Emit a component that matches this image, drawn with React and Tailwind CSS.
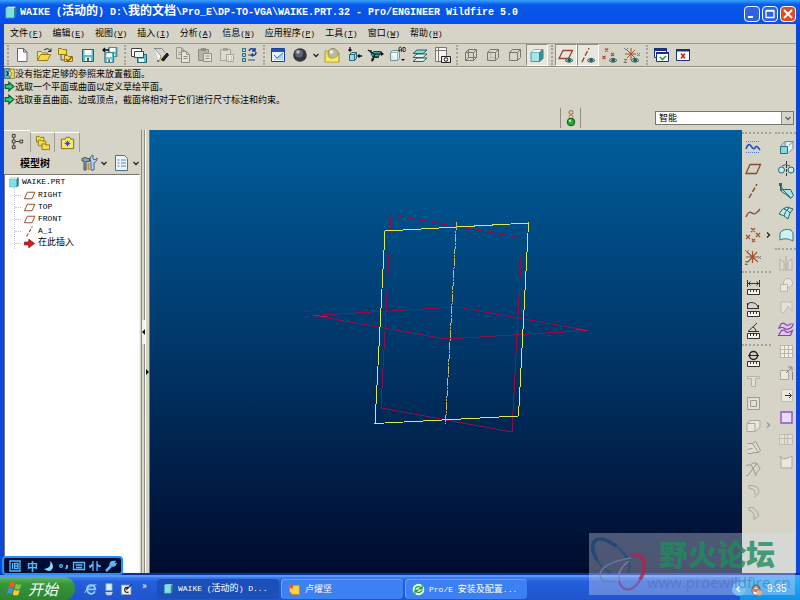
import React from "react";

const Icon = ({ children, size = 18 }) => (
  <svg width={size} height={size} viewBox="0 0 18 18" fill="none" strokeWidth="1" className="shrink-0" aria-hidden="true">
    {children}
  </svg>
);

const Eye = () => (
  <g>
    <path d="M8 14.500q4-4.500 8 0q-4 3.500-8 0z" fill="#b9d3d0" stroke="#44605f" />
    <circle cx="12.200" cy="14.300" r="1.800" fill="#17605e" />
  </g>
);
const Ruler = () => (
  <g>
    <path d="M3.500 11.500h12v5h-12z" fill="#f4f4ee" stroke="#333" />
    <path d="M6.500 12v2M9.500 12v2M12.500 12v2" stroke="#333" />
  </g>
);
const Disk = ({ x = 0, y = 0, s = 1 }) => (
  <g transform={`translate(${x} ${y}) scale(${s})`}>
    <path d="M3.500 3.500h11v12h-11z" fill="#5ac4cc" stroke="#2d5f70" />
    <path d="M5.500 4h7v5h-7zM6 11.500h6V15H6z" fill="#fff" />
    <path d="M8 12h2v3H8z" fill="#2d5f70" />
  </g>
);
const Folder = ({ x = 0, y = 0 }) => (
  <path transform={`translate(${x} ${y})`} d="M.5 1.500h3l1 1h4v5h-8z" fill="#f7dc4a" stroke="#8f7a18" />
);
const Page = ({ x = 0, y = 0, fill = "#fff", stroke = "#666" }) => (
  <g transform={`translate(${x} ${y})`}>
    <path d="M.5.5h5l3 3v8h-8z" fill={fill} stroke={stroke} />
    <path d="M5.500.5v3h3M2.500 5.500h4M2.500 7.500h4" stroke={stroke} />
  </g>
);
const Crosses = ({ color = "#a2522d" }) => (
  <path d="M4 2.500l3 3m0-3l-3 3M1.500 10l3 3m0-3l-3 3M10 7l3 3m0-3l-3 3" stroke={color} strokeWidth="1.300" />
);
const Cube = ({ hidden = false }) => (
  <g stroke="#77776f">
    <path d="M3.500 6.500h8v8h-8zM3.500 6.500l3-3h8v8l-3 3M11.500 6.500l3-3" />
    {hidden && <path d="M6.500 3.500v8h8M6.500 11.500l-3 3" />}
  </g>
);

const art = {
  newFile: <path d="M4.500 2.500h6l3.500 3.500v9.500H4.500zM10.500 2.500V6H14" fill="#fff" stroke="#666" />,
  open: (
    <g>
      <path d="M2.500 14.500v-9h4l1 1.500h5v2" fill="#f6e58a" stroke="#96801c" />
      <path d="M2.500 14.500l3-6h10l-3 6z" fill="#f8d848" stroke="#96801c" />
      <path d="M9 4q4-3 6.500 1M13 5.500h3V2.500" stroke="#222" />
    </g>
  ),
  workdir: (
    <g>
      <Folder x={1} y={1} />
      <Folder x={7} y={8} />
      <path d="M4 9v5h3" stroke="#555" />
      <path d="M9 13l2 2 4-4" stroke="#a33c16" strokeWidth="1.300" />
    </g>
  ),
  save: <Disk />,
  saveCopy: (
    <g>
      <Disk x={5} y={-1} s={0.75} />
      <Disk x={1} y={4} s={0.8} />
      <path d="M2 4h6M4 2L2 4l2 2" stroke="#111" strokeWidth="1.300" />
    </g>
  ),
  regen: (
    <g>
      <path d="M1.500 2.500h10v8h-10z" fill="#fff" stroke="#444" />
      <path d="M7.500 8.500h9v8h-9z" fill="#5ac4cc" stroke="#2d5f70" />
      <path d="M4.500 5.500h9v6h-9z" fill="#f2fbfb" stroke="#444" />
      <path d="M9 13h5v3H9z" fill="#fff" />
    </g>
  ),
  select: (
    <g>
      <path d="M2 2.500h8l3 4" stroke="#888" />
      <path d="M3 3l6 7-2 6" fill="#f6f6f6" stroke="#999" />
      <path d="M9 14l6-7 1.500 2-5 6z" fill="#222" stroke="#111" />
      <path d="M7 16l2-2.500 2 2z" fill="#e8d43c" />
      <path d="M5 15h2" stroke="#222" />
    </g>
  ),
  copy: (
    <g>
      <Page x={2} y={1} fill="#d9d7ca" stroke="#9a998f" />
      <Page x={7} y={5} fill="#e4e2d6" stroke="#8f8e85" />
    </g>
  ),
  paste: (
    <g>
      <path d="M2.500 3.500h10v11h-10z" fill="#b5b3a8" stroke="#8f8e85" />
      <path d="M5 2h5v3H5z" fill="#8f8e85" />
      <path d="M7.500 7.500h8v8h-8zM9.500 10h4M9.500 12.500h4" fill="#e4e2d6" stroke="#8f8e85" />
    </g>
  ),
  pasteSpecial: (
    <g>
      <path d="M2.500 3.500h10v11h-10z" fill="#dddbcf" stroke="#a3a298" />
      <path d="M5 2h5v3H5z" fill="#a3a298" />
      <path d="M8.500 8.500h7v7h-7zM10 11h1M10 13.500h1M13 11h1M13 13.500h1" fill="#e8e6da" stroke="#a3a298" />
    </g>
  ),
  tree: (
    <g>
      <path d="M2.500 2.500h3v3h-3zM2.500 7.500h3v3h-3zM2.500 12.500h3v3h-3z" fill="#8fdfe3" stroke="#2f6675" />
      <path d="M8 9h4M8 14h7" stroke="#777" strokeWidth="1.500" />
      <path d="M9 5q1-3 4-2l2 1M15 2v3h-3M16 6q0 4-4 3M13 7.500L11.500 9l1.500 1.500" stroke="#1c3f9a" strokeWidth="1.500" />
    </g>
  ),
  repaint: (
    <g>
      <path d="M2.500 2.500h13v13h-13z" fill="#e8f2ff" stroke="#1b3f9b" />
      <path d="M3 3h12v3H3z" fill="#2450b8" />
      <path d="M4 14L14 8v6z" fill="#a9d8f2" />
      <path d="M5 9l3 3 6-5" stroke="#3070b0" />
    </g>
  ),
  sphere: (
    <g>
      <circle cx="9" cy="9" r="6.800" fill="#33363f" />
      <circle cx="8" cy="7.500" r="4" fill="#5d6472" />
      <circle cx="7" cy="6" r="1.800" fill="#b9bec9" />
    </g>
  ),
  appearance: (
    <g>
      <path d="M2 5h4l1 2h9v9H2z" fill="#f5e04e" stroke="#b39b1c" />
      <circle cx="10" cy="7.500" r="5" fill="#bdb99f" stroke="#8e8a6d" />
      <circle cx="8.500" cy="6" r="1.800" fill="#f2f0e2" />
      <path d="M3 11q6 4 12-1v5.500H3z" fill="#f9e95c" />
    </g>
  ),
  refit: (
    <g>
      <path d="M4.500 8.500l2-2h5v6l-2 2h-5z" fill="#8fe0e4" stroke="#2f6675" />
      <path d="M4.500 8.500h5v6M9.500 8.500l2-2" stroke="#2f6675" />
      <path d="M5 1v4M3.500 3.500L5 5l1.500-1.500M17 10h-4M14.500 8.500L13 10l1.500 1.500" stroke="#111" strokeWidth="1.300" />
    </g>
  ),
  orient: (
    <g>
      <path d="M4 7.500l3-2h7l-3 6H6z" fill="#3aa9a2" stroke="#17413f" />
      <path d="M1 4l6 4 9 0M8 8l-3 7M6 11h6M4 4v3" stroke="#111" strokeWidth="1.200" />
      <path d="M14 5.500l3 2.500-3 2zM4.500 12l3 1.500L4.500 16z" fill="#111" />
    </g>
  ),
  views: (
    <g>
      <path d="M1.500 6.500l2-2h7v8l-2 2h-7z" fill="#cff2f3" stroke="#6e9096" />
      <path d="M1.500 6.500h7v8M8.500 6.500l2-2" stroke="#8fb2b8" fill="#fff" />
      <path d="M10 6V2.500q0-1.500 1.200-1.500t1.300 1.500V6M10 4h2.500M14 1.500v4h2q1-1 0-2 1-1.500 0-2z" stroke="#333" />
      <path d="M12 13h4l-2 2z" fill="#111" />
    </g>
  ),
  layers: (
    <g stroke="#2f5f66">
      <path d="M2 15.500l4-3.500h10l-4 3.500z" fill="#f0f0e8" />
      <path d="M2 11.500L6 8h10l-4 3.500z" fill="#f0f0e8" />
      <path d="M2 7.500L6 4h10l-4 3.500z" fill="#7ddbe0" />
    </g>
  ),
  viewMgr: (
    <g>
      <path d="M2.500 1.500h11v14h-11zM5.500 1.500v14M2.500 4.500h11" fill="#f4f4ec" stroke="#777" />
      <path d="M8.500 10.500h9v6h-9z" fill="#eee" stroke="#222" />
      <circle cx="13" cy="13.500" r="1.800" stroke="#222" />
    </g>
  ),
  wire: <Cube hidden />,
  hiddenLine: (
    <g>
      <path d="M6.500 6v5.500H11M6.500 11.500l-3 3" stroke="#b5b3a7" />
      <Cube />
    </g>
  ),
  noHidden: <Cube />,
  shaded: (
    <g>
      <path d="M3 6.500h8.500v9H3z" fill="#a5e8ec" stroke="#4e9aa3" />
      <path d="M3 6.500l3-3h9l-3.500 3z" fill="#effcfc" stroke="#7bb9bf" />
      <path d="M11.500 6.500l3.500-3v9l-3.500 3z" fill="#3f8d97" stroke="#3f7d87" />
    </g>
  ),
  planeEye: (
    <g>
      <path d="M2 12.500L6 4.500h9.500l-4 8z" stroke="#95482c" strokeWidth="1.300" />
      <Eye />
    </g>
  ),
  axisEye: (
    <g>
      <path d="M3 16L10 2" stroke="#95482c" strokeWidth="1.500" strokeDasharray="5 2" />
      <Eye />
    </g>
  ),
  pointEye: (
    <g>
      <Crosses color="#b4452f" />
      <Eye />
    </g>
  ),
  csysEye: (
    <g>
      <path d="M4 4l8 8M4 12l8-8M2 8h11M8 2v12" stroke="#a2522d" />
      <path d="M1 2l2 2 2-2M14 7l3 3m0-3l-3 3M1 13.500h3l-3 3h3" stroke="#777" />
      <Eye />
    </g>
  ),
  winOk: (
    <g>
      <path d="M2.500 2.500h12v9h-12z" fill="#fff" stroke="#1c2f78" />
      <path d="M2 2h13v3H2z" fill="#1c2f78" />
      <path d="M4.500 6.500h12v9h-12z" fill="#fff" stroke="#1c2f78" />
      <path d="M4 6h13v2H4z" fill="#1c2f78" />
      <path d="M8 11l2.500 2.500L14 10" stroke="#2a9a2a" strokeWidth="1.600" />
    </g>
  ),
  winClose: (
    <g>
      <path d="M2.500 3.500h13v11h-13z" fill="#fff" stroke="#1c2f78" />
      <path d="M2 3h14v2.500H2z" fill="#1c2f78" />
      <path d="M7 7.500l4 5m0-5l-4 5" stroke="#c42020" strokeWidth="1.500" />
    </g>
  ),

  sketch: (
    <g>
      <path d="M2 3.500h14M2 14.500h14" stroke="#4d80c0" strokeDasharray="1 1" />
      <path d="M2 11q2.500-7 5-3t4 2q1-4 5 2" stroke="#1d4fc0" strokeWidth="1.500" />
    </g>
  ),
  plane: <path d="M2 13.500L6 4.500h10.500l-4 9z" stroke="#8a4a2c" strokeWidth="1.300" />,
  axis: <path d="M5 16L13 2" stroke="#8a4a2c" strokeWidth="1.500" strokeDasharray="5 2" />,
  curve: <path d="M2 13q3-7 6-4t8-4" stroke="#8a4a2c" strokeWidth="1.300" />,
  points: (
    <path d="M7 2l4 4m0-4l-4 4M2 9l4 4m0-4l-4 4M12 7l4 4m0-4l-4 4M8 13l3 3m0-3l-3 3" stroke="#a2522d" strokeWidth="1.300" />
  ),
  csys: (
    <g>
      <path d="M3 4l11 10M4 14L13 4M2 9h12M8.500 3v12" stroke="#a2522d" strokeWidth="1.200" />
      <path d="M1 2l2 2 2-2M14 8l3 3m0-3l-3 3M1 13.500h3l-3 3h3" stroke="#777" />
    </g>
  ),
  measure: (
    <g>
      <path d="M3.500 2v7M15.500 2v7M4 5.500h11M6.500 3.500l-2 2 2 2M12.500 3.500l2 2-2 2" stroke="#333" />
      <Ruler />
    </g>
  ),
  length: (
    <g>
      <path d="M4 5q0-2.500 3-2.500 6 0 7 5M3.500 3v6M14.500 5v4M4 8.500h10" stroke="#333" />
      <Ruler />
    </g>
  ),
  angle: (
    <g>
      <path d="M13 1L4 9.500h11M9 5q2.500 1 3 4" stroke="#333" />
      <Ruler />
    </g>
  ),
  diameter: (
    <g>
      <circle cx="9.500" cy="5.500" r="4" stroke="#222" strokeWidth="1.500" />
      <path d="M4 5.500h11" stroke="#222" />
      <Ruler />
    </g>
  ),
  hole: <path d="M3.500 4.500h12v2h-4v8h-4v-8h-4z" fill="#e2e0d5" stroke="#b3b1a6" />,
  shell: <path d="M3.500 3.500h12v12h-12zM6.500 6.500h6v6h-6z" fill="#e2e0d5" stroke="#9e9c92" />,
  rib: <path d="M3 7.500h8v8H3zM3 7.500l4-3h9v7l-5 4" fill="#e8e6dc" stroke="#aaa89d" />,
  draft: <path d="M3.500 5.500h5l6 9h-4l-3 1h-4M8.500 5.500l3-2 5 9-2 2M3.500 11.500l5-1" fill="#deddd2" stroke="#99978c" />,
  round: <path d="M2 5.500q6-2 7 3l-5 7H2M9 8.500l4-5 3 5-5 7M9 8.500l3 7M13 3.500q-4-2-6 1" stroke="#99978c" />,
  chamfer: <path d="M5 3.500q10-1 10 7l-5 5M5 6.500q7 0 6 6M5 3.500v3" stroke="#a8a69b" />,
  chamfer2: <path d="M5 3.500q6-1 9 6l1 2-5 4M5 6.500q4 0 5 5v4M5 3.500v3" stroke="#a8a69b" />,

  extrude: (
    <g>
      <path d="M8 3.500h8v7l-4 4M8 3.500l-4 4M12 7.500l4-4M8 3.500v4" fill="#deeff0" stroke="#718a8d" />
      <path d="M3.500 8.500h7v7h-7z" fill="#83dbe2" stroke="#276d7b" />
    </g>
  ),
  revolve: (
    <g>
      <circle cx="4.500" cy="10" r="3" fill="#c1eff2" stroke="#32606a" />
      <circle cx="14" cy="10" r="3" fill="#c1eff2" stroke="#32606a" />
      <path d="M9.500 1v16" stroke="#333" strokeDasharray="3 1" />
      <path d="M5 6q4-3 8 0" stroke="#555" />
    </g>
  ),
  sweep: (
    <g>
      <path d="M3.500 2.500l2 5 8 0 3 6-3 3-3-3-6-4z" fill="#a6e6ea" stroke="#32606a" />
      <path d="M3.500 2.500v6l2-1 8 8" stroke="#32606a" />
      <path d="M2 1h3v3H2z" fill="#32606a" />
    </g>
  ),
  boundary: (
    <g>
      <path d="M2 10q3-6 8-7l6 2q-4 4-5 10-4-4-9-5z" fill="#b5ecef" stroke="#32606a" />
      <path d="M7 5q4 1 6 4M7 12q1-5 5-8" stroke="#32606a" />
    </g>
  ),
  style: <path d="M3 14V7q3-5 11-3l2 3v8q-7-4-13-1z" fill="#c9f3f4" stroke="#46727a" />,
  mirror: (
    <g>
      <path d="M3 5l4 3v8H3zM15 5l-4 3v8h4z" fill="#deddd2" stroke="#b3b1a6" />
      <path d="M9 2v15" stroke="#aaa89d" />
    </g>
  ),
  merge: (
    <g fill="#e9e7dd" stroke="#bab8ad">
      <circle cx="11" cy="7" r="4.500" />
      <path d="M3.500 8.500h7v7h-7z" />
    </g>
  ),
  trim: <path d="M4 4h11v9l-4-5-4 7-3-1z" fill="#e5e3d9" stroke="#bebcb1" />,
  offset: (
    <path d="M1.500 8.500l3-5q3-1 4 1t6-1M1.500 8.500q4-2 6 0t7-1l2-4M1.500 15.500l3-5q3-1 4 1t7-1l-2 5z" fill="#e2c5f3" stroke="#8a3eb6" strokeWidth="1.200" />
  ),
  pattern: (
    <path d="M3.500 3.500h12v12h-12zM7.500 4v11M11.500 4v11M4 7.500h11M4 11.500h11" fill="#f2efe7" stroke="#bcb3aa" />
  ),
  extend: (
    <g stroke="#aaa89d">
      <path d="M3.500 6.500h8v9h-8z" fill="#e9e7dd" />
      <path d="M9 9l6-6M11 3h4v4M15.500 8v8" stroke="#88867d" />
    </g>
  ),
  project: (
    <g>
      <path d="M4.500 3.500h11v12h-11z" fill="#eceadf" stroke="#c0beb3" />
      <path d="M8 9.500h6M12 7l2.500 2.500L12 12" stroke="#333" />
    </g>
  ),
  fill: <path d="M4 4h11v11H4z" fill="#eadcfa" stroke="#8b55cc" strokeWidth="1.400" />,
  thicken: <path d="M2.500 4.500h13v10h-13zM7.500 5v9M10.500 5v9M3 8.500h12" fill="#e2e0d5" stroke="#bebcb1" />,
  solidify: <path d="M3 4l3 3 5-1 4-2v12H4V7z" fill="#eae8de" stroke="#aaa89d" />,

  modelTree: <path d="M3.500 1.500h3v3h-3zM3.500 7.500h3v3h-3zM3.500 13.500h3v3h-3zM11.500 7.500h3v3h-3zM7 9h4M5 5v2M5 11v2" stroke="#333" />,
  folders: (
    <g>
      <Folder x={2} y={1} />
      <Folder x={4} y={5} />
      <Folder x={8} y={9} />
    </g>
  ),
  favorites: (
    <g>
      <path d="M2.500 5.500h4l1-2h4l1 2h3v10h-13z" fill="#fae96a" stroke="#7a6a1c" />
      <path d="M9 7v6M6 10h6M7 8l4 4m0-4l-4 4" stroke="#2244b8" />
    </g>
  ),
  tools: (
    <g>
      <path d="M2 4.500q3-2 6 0h1.500v3H6V16H4V7H2z" fill="#8fa6b5" stroke="#40525e" />
      <path d="M11 16V8l-1-3q0-3 3-4v4l2 1 2-2q1 3-3 5v7z" fill="#b9d4ee" stroke="#40608c" />
      <path d="M7.500 9h2v7h-2z" fill="#d28a30" />
    </g>
  ),
  list: (
    <g>
      <path d="M3.500 1.500h9l3 3v12h-12z" fill="#eaf5fc" stroke="#50708c" />
      <path d="M5.500 6h2M9 6h5M5.500 9h2M9 9h5M5.500 12h2M9 12h5" stroke="#5a84a8" />
    </g>
  ),
  part: (
    <g>
      <path d="M2.500 4.500h11v12h-11z" fill="#7fe0e6" stroke="#5ab8c0" />
      <path d="M2.500 4.500l2-2h11l-2 2z" fill="#eafcfc" stroke="#8fd0d4" />
      <path d="M13.500 4.500l2-2v12l-2 2z" fill="#2f7f8a" stroke="#2f7f8a" />
    </g>
  ),
  insert: <path d="M2 7h6V3l8 6-8 6v-4H2z" fill="#d21c1c" stroke="#8e1010" />,
};

const Chevron = ({ right = false, color = "#222" }) => (
  <svg width="8" height="8" viewBox="0 0 8 8" fill="none" className="shrink-0" aria-hidden="true">
    <path d={right ? "M3 1.500L5.500 4 3 6.500" : "M1.500 3L4 5.500 6.500 3"} stroke={color} strokeWidth="1.300" />
  </svg>
);

const Tool = ({ name, pressed = false }) => (
  <button
    type="button"
    aria-label={name}
    className={
      pressed
        ? "flex h-[22px] w-[22px] shrink-0 items-center justify-center border border-[#8f8d82] border-r-white border-b-white bg-[#e8e7df]"
        : "flex h-[22px] w-[22px] shrink-0 items-center justify-center"
    }
  >
    <Icon>{art[name]}</Icon>
  </button>
);

const Grip = () => (
  <div className="flex h-5 w-[7px] shrink-0 justify-center">
    <div className="border-l-2 border-dotted border-[#a5a398]" />
  </div>
);

const menus = [
  ["文件", "F"], ["编辑", "E"], ["视图", "V"], ["插入", "I"], ["分析", "A"],
  ["信息", "N"], ["应用程序", "P"], ["工具", "T"], ["窗口", "W"], ["帮助", "H"],
];

const TitleBar = () => (
  <header className="flex h-6 shrink-0 items-center bg-linear-to-b from-[#3aa0fa] via-[#0a58ea] via-20% to-[#0650e6] pr-1 pl-1">
    <Icon size={14}>{art.part}</Icon>
    <h1 className="ml-[2px] flex-1 truncate font-['Liberation_Mono','Noto_Sans_CJK_SC',monospace] text-[10px] leading-6 font-bold whitespace-pre text-white">
      WAIKE (<span className="text-[12px]">活动的</span>) D:\<span className="text-[12px]">我的文档</span>
      \Pro_E\DP-TO-VGA\WAIKE.PRT.32 - Pro/ENGINEER Wildfire 5.0
    </h1>
    <div className="flex gap-[2px] pt-1">
      <button type="button" aria-label="最小化" className="h-4 w-4 rounded-sm border border-white bg-[#2c62e4]">
        <svg viewBox="0 0 14 14" fill="none"><path d="M3 10h5" stroke="#fff" strokeWidth="2" /></svg>
      </button>
      <button type="button" aria-label="最大化" className="h-4 w-4 rounded-sm border border-white bg-[#2c62e4]">
        <svg viewBox="0 0 14 14" fill="none"><path d="M3 4h8v6.500H3zM3 3.500h8" stroke="#fff" strokeWidth="1.300" /></svg>
      </button>
      <button type="button" aria-label="关闭" className="h-4 w-4 rounded-sm border border-white bg-[#e0492a]">
        <svg viewBox="0 0 14 14" fill="none"><path d="M3 3l8 8m0-8l-8 8" stroke="#fff" strokeWidth="2" /></svg>
      </button>
    </div>
  </header>
);

const MenuBar = () => (
  <nav className="flex h-5 shrink-0 items-center gap-[10px] border-b border-[#a09e93] pl-[6px]">
    {menus.map(([label, key]) => (
      <button type="button" key={key} className="text-[9px] leading-4 whitespace-nowrap">
        {label}
        <span className="font-['Liberation_Mono',monospace] text-[8px]">
          (<u>{key}</u>)
        </span>
      </button>
    ))}
  </nav>
);

const Toolbar = () => (
  <div className="flex h-[23px] shrink-0 items-center border-b border-[#8f8d82] shadow-[0_1px_0_#ffffff80]">
    <Grip />
    <Tool name="newFile" /><Tool name="open" /><Tool name="workdir" /><Tool name="save" /><Tool name="saveCopy" />
    <Grip />
    <Tool name="regen" /><Tool name="select" /><Tool name="copy" /><Tool name="paste" /><Tool name="pasteSpecial" /><Tool name="tree" />
    <Grip />
    <Tool name="repaint" /><Tool name="sphere" />
    <button type="button" aria-label="sphere options" className="flex w-[10px] justify-center"><Chevron /></button>
    <Tool name="appearance" /><Tool name="refit" /><Tool name="orient" /><Tool name="views" /><Tool name="layers" /><Tool name="viewMgr" />
    <Grip />
    <Tool name="wire" /><Tool name="hiddenLine" /><Tool name="noHidden" /><Tool name="shaded" pressed />
    <Grip />
    <Tool name="planeEye" pressed /><Tool name="axisEye" pressed /><Tool name="pointEye" /><Tool name="csysEye" />
    <Grip />
    <Tool name="winOk" /><Tool name="winClose" />
  </div>
);

const PromptIcon = () => (
  <Icon size={11}>
    <path d="M1 1h9l-4 8 4 8H1z" fill="#52c8d8" stroke="#234" />
    <path d="M8 2h9v15H9l4-8z" fill="#f3e02e" stroke="#554" />
    <path d="M4 5l3 4-3 4" stroke="#123" strokeWidth="2" />
  </Icon>
);
const ArrowIcon = () => (
  <Icon size={11}>
    <path d="M2 6h6V2l8 7-8 7v-4H2z" fill="#27dc7c" stroke="#0d5a34" strokeWidth="2" />
  </Icon>
);

const Messages = () => (
  <section className="shrink-0 pb-[2px]">
    <ul className="text-[9px] leading-[13px]">
      <li className="flex items-center"><PromptIcon />没有指定足够的参照来放置截面。</li>
      <li className="flex items-center"><ArrowIcon />选取一个平面或曲面以定义草绘平面。</li>
      <li className="flex items-center"><ArrowIcon />选取垂直曲面、边或顶点，截面将相对于它们进行尺寸标注和约束。</li>
    </ul>
    <div className="mt-[2px] flex h-5 items-center justify-end pr-[2px]">
      <div className="flex h-5 w-[21px] items-center justify-center border-x border-[#8f8d82]">
        <svg width="10" height="18" viewBox="0 0 10 18" aria-hidden="true">
          <circle cx="5" cy="3.500" r="2" fill="#e4c4b4" stroke="#9a6a58" />
          <circle cx="5" cy="8" r="2" fill="#e9deb8" stroke="#9a8a58" />
          <circle cx="5" cy="13" r="3.800" fill="#25a835" stroke="#14541c" />
          <circle cx="4" cy="11.800" r="1.200" fill="#b3f2b5" />
        </svg>
      </div>
      <div className="ml-[74px] grid w-[139px] items-center">
        <select
          aria-label="过滤器"
          className="col-start-1 row-start-1 h-[14px] appearance-none border border-[#77756c] bg-white pl-[3px] text-[9px] leading-3"
        >
          <option>智能</option>
        </select>
        <span className="pointer-events-none col-start-1 row-start-1 mr-px flex h-3 w-3 items-center justify-center justify-self-end border-l border-[#8f8d82] bg-[#d6d5c9]">
          <Chevron color="#66645c" />
        </span>
      </div>
    </div>
  </section>
);

const treeItems = [
  ["plane", "RIGHT"], ["plane", "TOP"], ["plane", "FRONT"], ["axis", "A_1"], ["insert", "在此插入"],
];

const ModelTree = () => (
  <aside className="flex w-[136px] shrink-0 flex-col">
    <div className="flex h-[22px] shrink-0 items-end">
      <button type="button" aria-label="模型树" className="flex h-[22px] w-[26px] items-center justify-center border-t border-white">
        <Icon size={17}>{art.modelTree}</Icon>
      </button>
      <button type="button" aria-label="文件夹浏览器" className="flex h-5 w-[25px] items-center justify-center border-x border-t border-[#a09e93] border-t-white">
        <Icon size={17}>{art.folders}</Icon>
      </button>
      <button type="button" aria-label="收藏夹" className="flex h-5 w-[25px] items-center justify-center border-t border-r border-[#a09e93] border-t-white">
        <Icon size={17}>{art.favorites}</Icon>
      </button>
    </div>
    <div className="flex h-[22px] shrink-0 items-center">
      <h2 className="ml-4 flex-1 text-[10px] leading-4 font-bold">模型树</h2>
      <button type="button" aria-label="设置" className="mr-1 flex items-center gap-[2px]">
        <Icon>{art.tools}</Icon><Chevron />
      </button>
      <button type="button" aria-label="显示" className="flex items-center gap-[2px]">
        <Icon>{art.list}</Icon><Chevron />
      </button>
    </div>
    <div className="flex-1 border border-[#77756c] border-r-[#f5f4ee] border-b-[#f5f4ee] bg-white font-['Liberation_Mono','Noto_Sans_CJK_SC',monospace] text-[8px]">
      <div className="flex h-[13px] items-center gap-[2px] pl-[3px]">
        <Icon size={12}>{art.part}</Icon>WAIKE.PRT
      </div>
      <ul className="ml-[9px] border-l border-dotted border-[#c4c4c4] pt-px">
        {treeItems.map(([icon, label]) => (
          <li key={label} className="flex h-3 items-center">
            <span className="mr-[2px] w-[6px] border-t border-dotted border-[#c4c4c4]" />
            <Icon size={13}>{art[icon]}</Icon>
            <span className={icon === "insert" ? "ml-[2px] text-[9px] leading-3" : "ml-[2px] leading-3"}>{label}</span>
          </li>
        ))}
      </ul>
    </div>
  </aside>
);

const Divider = () => (
  <div className="flex w-[10px] shrink-0 justify-between border-r border-[#77756c] pl-[1px]">
    <div className="flex w-1 flex-col justify-center border-x border-[#8f8d82] pb-10">
      <button type="button" aria-label="折叠" className="flex h-6 w-1 items-center justify-center bg-[#f2f1ea]">
        <svg width="4" height="6" viewBox="0 0 4 6" className="shrink-0"><path d="M3 0v6L0 3z" fill="#111" /></svg>
      </button>
    </div>
    <div className="flex w-1 flex-col items-center justify-center border-l border-white pt-10">
      <svg width="4" height="6" viewBox="0 0 4 6" className="shrink-0" aria-hidden="true"><path d="M0 0l3 3-3 3z" fill="#111" /></svg>
    </div>
  </div>
);

const Viewport = () => (
  <main className="min-w-0 flex-1 bg-linear-to-b from-[#005e9c] via-[#003668] to-[#000c2e]">
    <svg viewBox="0 0 592 443" fill="none" shapeRendering="crispEdges" className="h-full w-full" role="img" aria-label="基准平面">
      <path d="M241 85l131 23-10 194-131-24z" stroke="#8c0f4c" />
      <path d="M163 185.500l144-8.500 131 23.500-142 8.500z" stroke="#8c0f4c" />
      <path d="M163 185.500l14 1M438 200.500l-12-1" stroke="#b01850" />
      <path d="M235 101l143.500-8-10 193-143.500 7.500z" stroke="#dcea50" />
      <path d="M306.500 92l-11 202" stroke="#c3bd68" strokeDasharray="8 1 2 1" />
    </svg>
  </main>
);

const HGrip = () => <div className="my-[2px] h-0 shrink-0 border-t-2 border-dotted border-[#a5a398]" />;

const SideTools = ({ names }) => names.map((name) => <Tool key={name} name={name} />);

const SideBar = () => (
  <aside className="flex w-[54px] shrink-0 gap-[4px]">
    <div className="flex w-[29px] flex-col">
      <HGrip />
      <SideTools names={["sketch", "plane", "axis", "curve"]} />
      <div className="flex items-center">
        <Tool name="points" /><Chevron right />
      </div>
      <SideTools names={["csys"]} />
      <div className="py-px"><HGrip /></div>
      <SideTools names={["measure", "length", "angle"]} />
      <HGrip />
      <SideTools names={["diameter", "hole", "shell"]} />
      <div className="flex items-center">
        <Tool name="rib" /><Chevron right color="#99978c" />
      </div>
      <SideTools names={["draft", "round", "chamfer", "chamfer2"]} />
    </div>
    <div className="flex w-[21px] flex-col">
      <HGrip />
      <SideTools names={["extrude", "revolve", "sweep", "boundary", "style"]} />
      <HGrip />
      <SideTools names={["mirror", "merge", "trim", "offset", "pattern", "extend", "project", "fill", "thicken", "solidify"]} />
    </div>
  </aside>
);

const Ime = () => (
  <div className="absolute bottom-[25px] left-[2px] flex h-[19px] w-[121px] items-center gap-[6px] overflow-hidden rounded-sm border-2 border-[#1e90ff] bg-[#000c30] pl-[5px] text-[11px] leading-4 font-bold text-[#5cb8ff]">
    <svg width="12" height="12" viewBox="0 0 12 12" fill="none" className="shrink-0" aria-hidden="true">
      <path d="M1 1h10v10H1zM3.500 3v6M5.500 3.500h3.500v5H5.500zM5.500 6h3" stroke="#5cb8ff" strokeWidth="1.300" />
    </svg>
    <span>中</span>
    <svg width="78" height="12" viewBox="0 0 78 12" fill="none" stroke="#5cb8ff" strokeWidth="1.300" className="shrink-0" aria-hidden="true">
      <path d="M6 1q2 7-6 8 7 5 9-2 0-4-3-6z" fill="#8fd4ff" stroke="none" />
      <circle cx="17" cy="6" r="1.300" />
      <path d="M23 5v2l-1 2" strokeWidth="2" />
      <path d="M29.500 2.500h11v7h-11zM31.500 5h7M32 7.500h6" />
      <path d="M49 1v10M53 1v10M45 6h4M48 4l-2 4M53 6h4M53 4l3 3" />
      <path d="M62 11l5-5" strokeWidth="2.500" />
      <path d="M71 1.500q-5-1-5 4 5 2 6-2l-3 1z" fill="#5cb8ff" />
    </svg>
  </div>
);

const TaskButton = ({ active = false, icon, children }) => (
  <button
    type="button"
    className={
      active
        ? "flex h-5 w-[122px] items-center gap-1 rounded-sm bg-[#1d4fb8] pl-[6px] text-[9px] text-white"
        : "flex h-5 w-[122px] items-center gap-1 rounded-sm border-t border-l border-[#6ba4fa] bg-[#3c80f2] pl-[6px] text-[9px] text-white"
    }
  >
    {icon}
    <span className="truncate leading-4 whitespace-pre">{children}</span>
  </button>
);

const Mono = ({ children }) => <span className="font-['Liberation_Mono',monospace] text-[8px]">{children}</span>;

const Taskbar = () => (
  <footer className="flex h-[25px] shrink-0 items-center overflow-hidden border-t-2 border-[#5a96fa] bg-linear-to-b from-[#3f80f0] via-[#245edb] via-20% to-[#1f55cd]">
    <button
      type="button"
      className="flex h-full w-[75px] items-center gap-[4px] rounded-r-xl bg-linear-to-b from-[#5fb85f] via-[#36963a] via-30% to-[#2e8430] pl-[6px] text-[15px] leading-5 text-white italic"
    >
      <svg width="18" height="17" viewBox="0 0 18 17" aria-hidden="true">
        <path d="M4 3q3-2 5 0L7.500 8q-2-2-5 0z" fill="#ee5a2a" />
        <path d="M10 3.500q2 2 5.500.5L14 9q-3 1-5.500-.5z" fill="#7cc844" />
        <path d="M2.200 9q3-2 5 0L5.700 14q-2-2-5 0z" fill="#4a8cf0" />
        <path d="M8.200 9.500q2 2 5.500.5L12.200 15q-3 1-5.500-.5z" fill="#f8cc30" />
      </svg>
      <span>开始</span>
    </button>
    <div className="ml-[9px] flex w-[73px] items-center gap-[4px]">
      <a href="#ie" aria-label="Internet Explorer">
        <Icon size={14}>
          <path d="M14 12q-2 4-6 3-4-1-4-6t5-5q5 0 5.500 5.500H5" stroke="#8ccdfb" strokeWidth="2.400" />
          <path d="M1 14Q3 6 16 3" stroke="#bfe4ff" />
        </Icon>
      </a>
      <a href="#desktop" aria-label="显示桌面">
        <Icon size={14}>
          <path d="M5 2h8v9H5z" fill="#dcecfc" stroke="#6aa0e0" />
          <path d="M4 13h10l-2 4H6z" fill="#b9d5f2" />
        </Icon>
      </a>
      <a href="#editor" aria-label="编辑器">
        <Icon size={14}>
          <path d="M2 4h12v12H2z" fill="#f2f2ea" stroke="#9ab" />
          <path d="M11 7q-5-1-5 3t5 3M8 10l7-7" stroke="#223" strokeWidth="1.600" />
        </Icon>
      </a>
      <span className="mb-2 ml-1 text-[10px] leading-3 text-white">»</span>
    </div>
    <div className="flex gap-[2px]">
      <TaskButton active icon={<Icon size={11}>{art.part}</Icon>}>
        <Mono>WAIKE (</Mono>活动的<Mono>) D...</Mono>
      </TaskButton>
      <TaskButton
        icon={
          <Icon size={13}>
            <path d="M2 3h14v13H6l-4-4z" fill="#f8d04c" stroke="#b5821c" />
            <path d="M2 2l6 1-2 5-4-1z" fill="#e55a28" />
          </Icon>
        }
      >
        卢燿坚
      </TaskButton>
      <TaskButton
        icon={
          <Icon size={13}>
            <circle cx="9" cy="9" r="8" fill="#f4fff2" />
            <path d="M4 8q4-6 9-1M14 3v5H9M14 10q-4 6-9 1M4 15v-5h5" stroke="#28a43c" strokeWidth="2" />
          </Icon>
        }
      >
        <Mono>Pro/E </Mono>安装及配置<Mono>...</Mono>
      </TaskButton>
    </div>
    <div className="flex-1" />
    <div className="flex h-full w-[60px] items-center gap-[3px] bg-linear-to-b from-[#2ab0f8] to-[#1290e8] text-[9px] text-white">
      <button type="button" aria-label="显示隐藏图标" className="-ml-[8px] flex h-[14px] w-[14px] shrink-0 items-center justify-center rounded-full bg-[#45b4f4]">
        <svg width="8" height="8" viewBox="0 0 8 8" fill="none"><path d="M5 1L2 4l3 3" stroke="#fff" strokeWidth="1.600" /></svg>
      </button>
      <Icon size={14}>
        <ellipse cx="9" cy="10" rx="6" ry="7" fill="#34343c" />
        <ellipse cx="9" cy="12" rx="4" ry="4.500" fill="#fff" />
        <path d="M4 9h10l1 3-6 1-6-1z" fill="#d8402c" />
        <ellipse cx="9" cy="7" rx="3" ry="1.500" fill="#f6b030" />
        <circle cx="13" cy="14" r="3.500" fill="#f29b54" />
      </Icon>
      <time className="z-10 ml-px font-['Liberation_Sans',sans-serif] text-[10px] leading-4">9:35</time>
    </div>
  </footer>
);

const Watermark = () => (
  <div className="pointer-events-none absolute right-[5px] bottom-[5px] flex h-[62px] w-[206px] bg-[#dcdcf0]/35">
    <svg width="58" height="62" viewBox="0 0 58 62" fill="none" className="shrink-0" aria-hidden="true">
      <g opacity=".8">
        <path d="M39 40Q45 30 30 15 14 2 6 7-2 14 10 30q5 7 12 10" stroke="#244e7c" strokeWidth="2" />
        <path d="M8 27Q0 12 7 7q6-4 20 6" stroke="#1c4474" strokeWidth="3.500" />
        <path d="M42 21.500q15-1 13 15-4 16-14 20-9 1-11-9" stroke="#8a4a84" strokeWidth="2" />
        <path d="M42 21.500q14-1 13 12 0 7-4 13" stroke="#b3224e" strokeWidth="3.500" />
        <path d="M42 25Q12 30 11 42q1 9 16 6" stroke="#6c82b0" strokeWidth="1.500" />
        <path d="M40 28q-12 8-10 20" stroke="#8088b4" strokeWidth="1.500" />
      </g>
    </svg>
    <div className="flex flex-col pl-[12px]">
      <strong className="text-[29px] leading-[40px] font-black whitespace-nowrap text-[#1c8c5c]/80">野火论坛</strong>
      <span className="-ml-[12px] font-['Open_Sans',sans-serif] text-[15px] leading-[18px] text-[#4a74b8]/70">www.proewildfire.cn</span>
    </div>
  </div>
);

export default function App() {
  return (
    <div className="relative flex h-screen flex-col overflow-hidden bg-[#0a48dc] font-['Noto_Sans_CJK_SC',sans-serif] text-black">
      <TitleBar />
      <div className="mx-1 flex min-h-0 flex-1 flex-col bg-[#d5d4c6]">
        <MenuBar />
        <Toolbar />
        <Messages />
        <div className="flex min-h-0 flex-1">
          <ModelTree />
          <Divider />
          <Viewport />
          <SideBar />
        </div>
      </div>
      <div className="h-[2px] shrink-0 bg-[#0831a8]" />
      <Watermark />
      <Taskbar />
      <Ime />
    </div>
  );
}
